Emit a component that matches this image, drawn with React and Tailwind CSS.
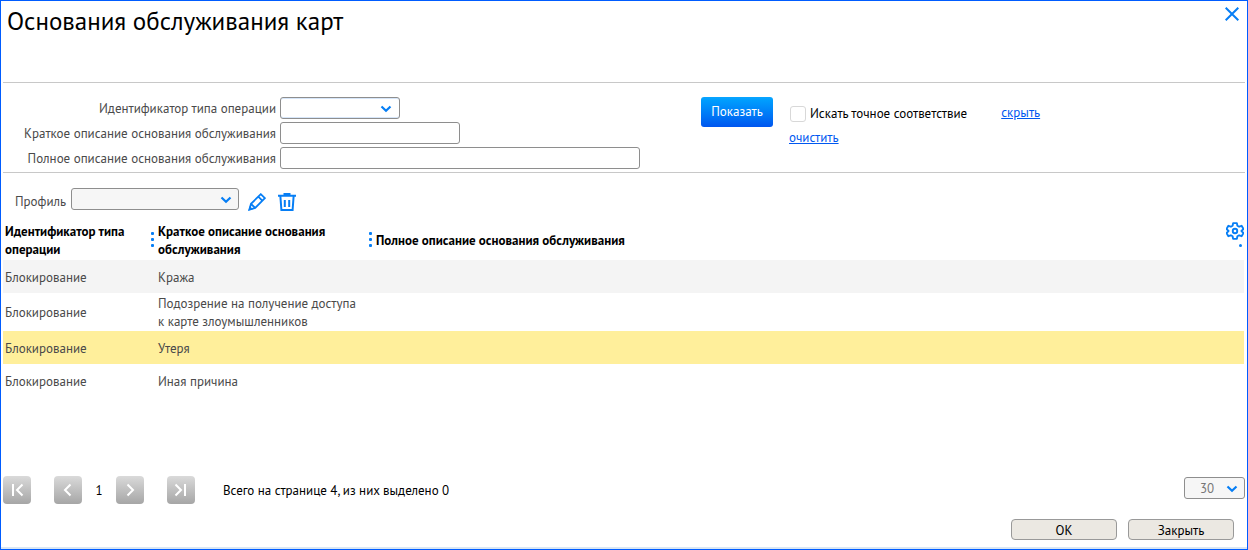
import { useState } from "react";

const rows = [
  { type: "Блокирование", short: "Кража", full: "" },
  { type: "Блокирование", short: "Подозрение на получение доступа к карте злоумышленников", full: "" },
  { type: "Блокирование", short: "Утеря", full: "" },
  { type: "Блокирование", short: "Иная причина", full: "" },
];

function Chevron({ className }) {
  return (
    <svg className={`absolute pointer-events-none ${className}`} width="12" height="8" viewBox="0 0 12 8" fill="none">
      <path d="M1.5 1.5 6 5.7l4.5-4.2" stroke="#067ef5" strokeWidth="2.2" />
    </svg>
  );
}

function Dots() {
  return (
    <svg className="shrink-0 mb-1" width="3" height="15" viewBox="0 0 3 15" fill="#067ef5">
      <rect width="3" height="3" rx="1" />
      <rect y="6" width="3" height="3" rx="1" />
      <rect y="12" width="3" height="3" rx="1" />
    </svg>
  );
}

function PageButton({ label, path }) {
  return (
    <button
      type="button"
      aria-label={label}
      className="w-7 h-7 rounded bg-linear-to-b from-[#dadada] to-[#a6a6a6] flex items-center justify-center"
    >
      <svg width="28" height="28" viewBox="0 0 28 28" fill="none" stroke="#fff" strokeWidth="2">
        <path d={path} />
      </svg>
    </button>
  );
}

export default function App() {
  const [exact, setExact] = useState(false);
  const [selected, setSelected] = useState(2);

  return (
    <div className="min-h-screen flex flex-col border border-[#005cff] bg-white text-[13px] leading-[18px] text-[#4a4a4a] font-['PT_Sans','Noto_Sans',sans-serif]">
      <header className="flex justify-between items-start h-[81px] mx-0.5 border-b border-[#c8c8c8] box-content">
        <h1 className="pl-1 pt-1 text-[25px] leading-8 text-black">Основания обслуживания карт</h1>
        <button type="button" aria-label="Закрыть окно" className="mt-1.5 mr-1.5">
          <svg width="14" height="14" viewBox="0 0 14 14" stroke="#067ef5" strokeWidth="2">
            <path d="M.7.7l12.6 12.6M13.3.7.7 13.3" />
          </svg>
        </button>
      </header>

      <form
        className="flex items-start mx-0.5 pt-3.5 pb-[3px] border-b border-[#c8c8c8]"
        onSubmit={(e) => e.preventDefault()}
      >
        <div className="grid grid-cols-[273px_360px] gap-x-1 gap-y-[3px] items-center text-right">
          <label htmlFor="type" className="pt-0.5">Идентификатор типа операции</label>
          <div className="relative w-[120px] h-[22px]">
            <select
              id="type"
              className="appearance-none block w-full h-full rounded-[3px] border border-[#8e8e8e] bg-white shadow-[inset_0_1px_0_#d6e6fa,inset_0_-1px_0_#d6e6fa]"
            >
              <option></option>
            </select>
            <Chevron className="right-2 top-2" />
          </div>
          <label htmlFor="short" className="pt-0.5">Краткое описание основания обслуживания</label>
          <input id="short" className="w-[180px] h-[22px] rounded-[3px] border border-[#8e8e8e] px-1" />
          <label htmlFor="full" className="pt-0.5">Полное описание основания обслуживания</label>
          <input id="full" className="w-[360px] h-[22px] rounded-[3px] border border-[#8e8e8e] px-1" />
        </div>

        <button
          type="submit"
          className="ml-[61px] w-[72px] h-[30px] shrink-0 rounded-[3px] bg-linear-to-b from-[#0aa5ff] to-[#0055ef] text-white"
        >
          Показать
        </button>
        <div className="ml-4 pt-2">
          <label className="flex items-center gap-1 pl-px text-black whitespace-nowrap">
            <input
              type="checkbox"
              checked={exact}
              onChange={(e) => setExact(e.target.checked)}
              className="appearance-none w-4 h-4 rounded-[3px] border border-[#d8d8d8] checked:bg-[#067ef5]"
            />
            Искать точное соответствие
          </label>
          <a href="#" className="block mt-1.5 w-fit text-[#0058f0] underline">
            очистить
          </a>
        </div>
        <a href="#" className="ml-[34px] pt-[7px] text-[#0058f0] underline">
          скрыть
        </a>
      </form>

      <div className="flex items-start pl-3.5 pt-[15px] h-[49px]">
        <label htmlFor="profile" className="pt-[5px] w-14">
          Профиль
        </label>
        <div className="relative w-[168px] h-[22px]">
          <select
            id="profile"
            className="appearance-none block w-full h-full rounded-[3px] border border-[#8e8e8e] bg-[#f6f6f6]"
          >
            <option></option>
          </select>
          <Chevron className="right-[7px] top-2" />
        </div>
        <button type="button" aria-label="Изменить" className="ml-[9px] mt-[5px]">
          <svg width="18" height="18" viewBox="0 0 18 18" fill="none" stroke="#067ef5" strokeWidth="1.8">
            <path d="M1.3 16.7 3 10.8 12.8 1.2 16.9 5.2 7.2 15 1.3 16.7ZM10.3 3.7l4 4M3 10.8l4.2 4.2" />
            <path d="M.4 17.600l1.400-4.600 3.200 3.200z" fill="#067ef5" stroke="none" />
          </svg>
        </button>
        <button type="button" aria-label="Удалить" className="ml-3 mt-[5px]">
          <svg width="18" height="18" viewBox="0 0 18 18" fill="none" stroke="#067ef5" strokeWidth="2">
            <path d="M0 2.8h18M5.5 1h7M2.4 3.5l1 13.5h11.2l1-13.5M6.8 7v7M11.2 7v7" />
          </svg>
        </button>
      </div>

      <table className="table-fixed ml-0.5 mr-[3px] w-auto">
        <colgroup>
          <col className="w-[153px]" />
          <col className="w-[218px]" />
          <col />
        </colgroup>
        <thead>
          <tr className="h-[38px] text-left font-bold text-black">
            <th className="p-0 pl-0.5 pr-0.5">
              <div className="flex items-center justify-between">
                <span className="w-32">Идентификатор типа операции</span>
                <Dots />
              </div>
            </th>
            <th className="p-0 pl-0.5 pr-0.5">
              <div className="flex items-center justify-between">
                <span className="w-48">Краткое описание основания обслуживания</span>
                <Dots />
              </div>
            </th>
            <th className="p-0 pl-0.5 pb-0.5">
              <div className="flex items-center justify-between h-9">
                <span className="pt-0.5">Полное описание основания обслуживания</span>
                <button type="button" aria-label="Настройка таблицы" className="flex flex-col items-end self-start">
                  <svg width="18" height="18" viewBox="0 0 24 24" fill="none" stroke="#067ef5" strokeWidth="2.5">
                    <path d="M9.500 1.500h5l.7 3.500 2.300 1.300 3.300-1.200 2.500 4.300-2.700 2.600 2.700 2.600-2.500 4.300-3.300-1.200-2.300 1.300-.7 3.500h-5L8.800 19l-2.300-1.300-3.300 1.200L.7 14.600 3.400 12 .7 9.400l2.500-4.300 3.300 1.200L8.800 5z" strokeLinejoin="round" />
                    <circle cx="12" cy="12" r="3" />
                  </svg>
                  <span className="mt-1 mr-0.5 w-[3px] h-[3px] rounded-full bg-[#067ef5]" />
                </button>
              </div>
            </th>
          </tr>
        </thead>
        <tbody>
          {rows.map((row, i) => (
            <tr
              key={i}
              onClick={() => setSelected(i)}
              className={`h-[33px] ${i === selected ? "bg-[#ffef9b]" : i === 0 ? "bg-[#f4f4f4]" : ""}`}
            >
              <td className="pt-0.5 pb-0 pl-0.5">{row.type}</td>
              <td className="pt-0.5 pb-0 pl-0.5 pr-3">{row.short}</td>
              <td className="pt-0.5 pb-0 pl-0.5">{row.full}</td>
            </tr>
          ))}
        </tbody>
      </table>

      <footer className="mt-auto border-b-2 border-[#d9e6f3] pb-[7px]">
        <div className="flex items-start pl-0.5 pr-0.5 text-black">
          <PageButton label="Первая страница" path="M10 8v12M19.500 8.500 14 14l5.500 5.500" />
          <div className="flex items-center mx-[23px]">
            <PageButton label="Предыдущая страница" path="M16.500 8.500 11 14l5.500 5.500" />
            <span className="w-[34px] pt-0.5 text-center">1</span>
            <PageButton label="Следующая страница" path="M11.500 8.500 17 14l-5.500 5.500" />
          </div>
          <PageButton label="Последняя страница" path="M8.500 8.500 14 14l-5.500 5.500M18 8v12" />
          <span className="ml-7 pt-1.5">Всего на странице 4, из них выделено 0</span>
          <div className="relative ml-auto mt-px w-[61px] h-[22px]">
            <select
              aria-label="Строк на странице"
              defaultValue="30"
              className="appearance-none block w-full h-full pt-0.5 pl-[15px] rounded-[3px] border border-[#8e8e8e] bg-[#f6f6f6] text-[#777]"
            >
              <option>30</option>
              <option>50</option>
            </select>
            <Chevron className="right-[7px] top-2" />
          </div>
        </div>
        <div className="flex justify-end gap-[11px] mt-[15px] pr-[13px] text-black">
          <button type="button" className="w-[106px] h-[21px] pt-0.5 rounded border border-[#999] bg-[#ebe8e2]">
            ОК
          </button>
          <button type="button" className="w-[106px] h-[21px] pt-0.5 rounded border border-[#999] bg-[#ebe8e2]">
            Закрыть
          </button>
        </div>
      </footer>
    </div>
  );
}
